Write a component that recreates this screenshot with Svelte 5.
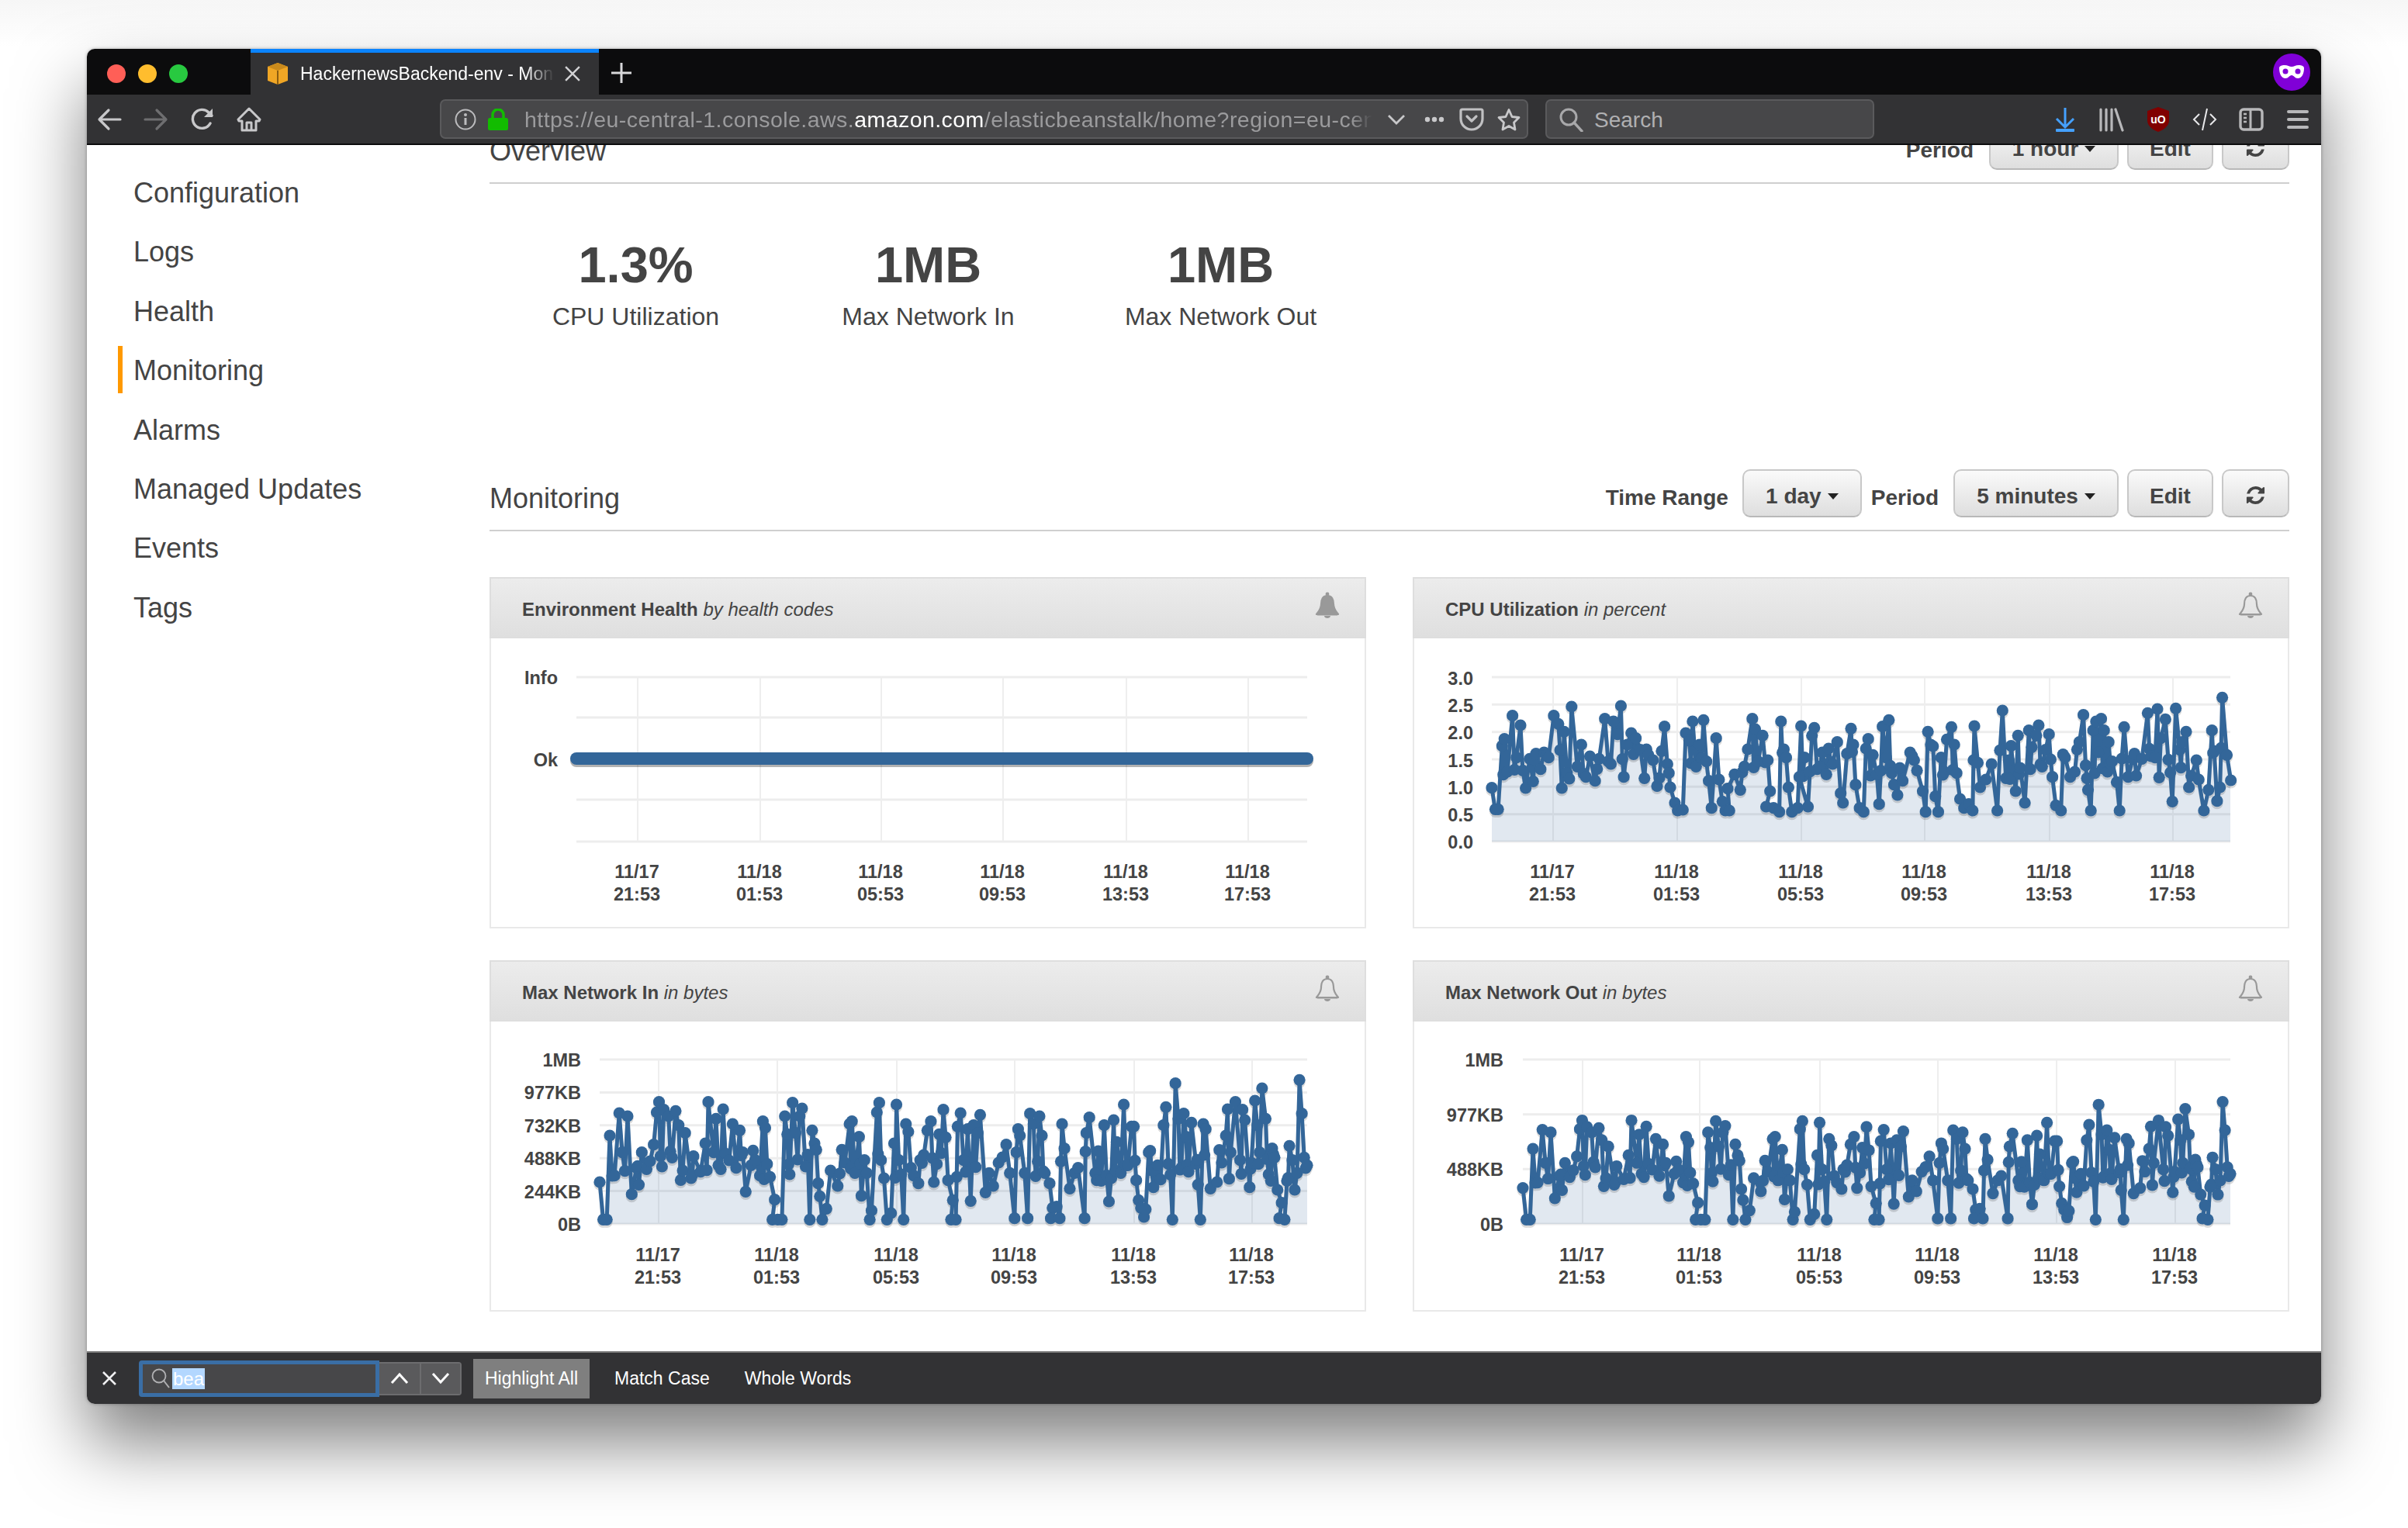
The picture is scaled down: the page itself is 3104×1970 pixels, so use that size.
<script>
	const cpu = [[139,857],[145,940],[150,940],[157,695],[161,668],[166,795],[175,578],[182,740],[189,615],[193,790],[198,858],[205,745],[211,832],[216,725],[224,785],[230,720],[238,740],[247,578],[255,610],[261,858],[265,640],[270,800],[278,543],[288,775],[295,690],[303,815],[310,735],[319,830],[326,745],[336,590],[342,755],[351,600],[358,650],[364,540],[369,815],[375,690],[382,645],[390,665],[398,710],[405,820],[412,730],[420,750],[427,850],[435,715],[440,620],[445,765],[450,855],[458,915],[463,945],[472,942],[477,645],[483,675],[489,600],[495,775],[501,690],[508,595],[513,755],[517,830],[522,935],[530,665],[535,825],[541,910],[546,945],[553,945],[550,860],[562,805],[572,865],[579,775],[585,708],[593,590],[598,630],[603,755],[611,655],[620,750],[624,870],[617,930],[630,935],[640,950],[643,600],[648,708],[652,740],[656,855],[662,950],[672,935],[678,618],[684,740],[675,815],[690,930],[697,655],[701,625],[706,785],[715,720],[722,805],[726,705],[733,765],[741,680],[747,878],[751,915],[758,725],[765,628],[769,690],[773,845],[780,935],[787,950],[791,705],[795,668],[803,730],[810,805],[814,920],[820,620],[826,740],[831,595],[836,800],[840,845],[846,885],[850,780],[855,830],[868,720],[875,750],[880,790],[890,870],[895,950],[899,640],[904,690],[912,890],[917,950],[922,740],[928,795],[932,670],[940,622],[945,690],[949,800],[955,900],[962,935],[970,920],[977,945],[980,618],[986,760],[990,855],[1000,825],[1010,765],[1020,945],[1029,558],[1035,820],[1040,750],[1044,695],[1052,870],[1056,655],[1060,780],[1068,915],[1075,635],[1080,700],[1088,655],[1092,615],[1098,775],[1104,710],[1110,650],[1116,815],[1122,925],[1131,945],[1138,740],[1147,815],[1155,795],[1163,680],[1170,575],[1174,770],[1178,865],[1183,945],[1187,635],[1192,600],[1196,720],[1201,590],[1206,635],[1212,795],[1214,680],[1220,755],[1228,835],[1233,945],[1241,622],[1248,815],[1256,745],[1262,810],[1272,745],[1282,568],[1288,735],[1295,740],[1299,552],[1305,665],[1313,592],[1318,748],[1325,910],[1331,550],[1338,710],[1342,680],[1349,640],[1354,855],[1358,810],[1367,750],[1371,825],[1380,945],[1388,865],[1394,635],[1398,715],[1403,908],[1408,855],[1412,508],[1420,730],[1427,828]];

	const net = [[200,885],[206,1030],[212,1030],[217,705],[225,860],[233,618],[238,770],[247,630],[254,932],[262,830],[266,895],[271,770],[279,835],[291,740],[296,615],[300,575],[305,825],[308,605],[316,630],[322,790],[328,610],[333,665],[340,840],[344,695],[354,870],[358,785],[370,845],[378,735],[383,575],[392,770],[396,640],[404,835],[408,603],[412,775],[424,660],[430,830],[436,685],[441,770],[446,922],[455,820],[462,800],[470,860],[475,650],[479,675],[482,815],[487,865],[495,953],[491,1030],[500,1030],[507,1030],[512,630],[516,700],[520,855],[525,578],[530,695],[537,630],[541,600],[547,825],[554,1030],[558,685],[562,735],[568,890],[571,940],[575,1030],[582,988],[589,840],[601,900],[608,760],[613,810],[621,660],[625,650],[630,850],[637,710],[641,938],[646,800],[650,850],[655,1030],[658,995],[667,615],[671,578],[674,800],[679,870],[684,1030],[691,1005],[696,735],[700,585],[704,800],[708,855],[712,1030],[716,660],[720,690],[729,860],[737,890],[740,800],[746,780],[752,685],[758,650],[763,885],[768,815],[772,700],[779,605],[783,712],[787,878],[795,955],[792,1030],[800,1030],[803,670],[808,618],[813,800],[820,680],[825,958],[830,665],[837,695],[841,625],[850,925],[856,850],[863,900],[872,810],[885,740],[891,850],[899,1025],[905,680],[908,705],[916,850],[921,1025],[925,620],[931,660],[938,805],[941,630],[945,705],[950,850],[958,890],[963,985],[960,1025],[970,980],[975,1025],[979,660],[983,755],[992,910],[1000,850],[1006,830],[1017,1025],[1020,695],[1025,635],[1035,850],[1040,765],[1045,880],[1050,665],[1058,960],[1062,870],[1066,645],[1071,730],[1078,850],[1083,585],[1090,820],[1096,670],[1100,670],[1104,878],[1108,955],[1112,985],[1117,1020],[1120,990],[1125,770],[1130,840],[1133,905],[1140,820],[1150,665],[1154,595],[1158,815],[1165,1030],[1170,503],[1175,640],[1180,830],[1184,620],[1188,710],[1192,845],[1197,655],[1205,815],[1208,895],[1212,1030],[1217,660],[1221,680],[1229,910],[1240,885],[1248,810],[1255,705],[1258,603],[1263,770],[1271,575],[1279,800],[1283,605],[1287,645],[1295,905],[1298,810],[1304,570],[1308,665],[1312,770],[1316,522],[1322,640],[1327,855],[1331,880],[1333,755],[1337,790],[1342,915],[1349,965],[1345,1025],[1354,1030],[1358,880],[1362,745],[1367,800],[1371,915],[1379,490],[1383,620],[1387,790],[1392,820]];

	// the real series has 288 samples; thicken it a little between the ones read off by eye
	function densify(points, band) {
		const out = [];
		points.forEach((p, i) => {
			out.push(p);
			const next = points[i + 1];
			if (!next || i % 3 || (p[1] > band && next[1] > band)) return;
			out.push([(p[0] + next[0]) / 2, band + ((i * 37) % 130) - 80]);
		});
		return out;
	}

	const cpuPts = densify(cpu, 775).map(([x, y]) => [(x - 139) / 1.352 + 100, y / 3 - 93]);
	const netDense = densify(net, 830);
	const inPts = netDense.map(([x, y]) => [(x - 200) / 1.307 + 140, y / 3 - 88]);
	const outPts = netDense.map(([x, y]) => [(x - 200) / 1.307 + 140, (1030 - (1030 - y) * 0.843) / 3 - 88]);

	const dates = [
		['11/17', '21:53'],
		['11/18', '01:53'],
		['11/18', '05:53'],
		['11/18', '09:53'],
		['11/18', '13:53'],
		['11/18', '17:53']
	];

	function yAxis(labels, top, bottom) {
		return labels.map((text, i) => ({ text, y: top + ((bottom - top) * i) / (labels.length - 1) }));
	}

	const cards = [
		{
			title: 'Environment Health',
			unit: 'by health codes',
			alarm: true,
			left: 110,
			right: 1052,
			top: 50,
			bottom: 262,
			labelX: 86,
			grid: [50, 102, 155, 208, 262],
			ticks: [189, 347, 503, 660, 819, 976],
			labels: [
				{ text: 'Info', y: 51 },
				{ text: 'Ok', y: 157 }
			],
			bar: true
		},
		{
			title: 'CPU Utilization',
			unit: 'in percent',
			left: 100,
			right: 1052,
			top: 50,
			bottom: 262,
			labelX: 76,
			ticks: [179, 339, 499, 658, 819, 978],
			labels: yAxis(['3.0', '2.5', '2.0', '1.5', '1.0', '0.5', '0.0'], 52, 263),
			points: cpuPts
		},
		{
			title: 'Max Network In',
			unit: 'in bytes',
			left: 140,
			right: 1052,
			top: 49,
			bottom: 261,
			labelX: 116,
			ticks: [216, 369, 523, 675, 829, 981],
			labels: yAxis(['1MB', '977KB', '732KB', '488KB', '244KB', '0B'], 50, 262),
			points: inPts
		},
		{
			title: 'Max Network Out',
			unit: 'in bytes',
			left: 140,
			right: 1052,
			top: 49,
			bottom: 261,
			labelX: 115,
			ticks: [217, 368, 523, 675, 828, 981],
			labels: yAxis(['1MB', '977KB', '488KB', '0B'], 50, 262),
			points: outPts
		}
	];

	function gridLines(card) {
		if (card.grid) return card.grid;
		return card.labels.map((_, i) => card.top + ((card.bottom - card.top) * i) / (card.labels.length - 1));
	}

	function linePath(points) {
		return points.map(([x, y], i) => `${i ? 'L' : 'M'}${x.toFixed(1)} ${y.toFixed(1)}`).join('');
	}

	function areaPath(card) {
		const pts = card.points;
		return `${linePath(pts)}L${card.right} ${pts[pts.length - 1][1].toFixed(1)}L${card.right} ${card.bottom}L${card.left} ${card.bottom}L${card.left} ${pts[0][1].toFixed(1)}Z`;
	}

	const navItems = ['Configuration', 'Logs', 'Health', 'Monitoring', 'Alarms', 'Managed Updates', 'Events', 'Tags'];
	const stats = [
		{ value: '1.3%', label: 'CPU Utilization' },
		{ value: '1MB', label: 'Max Network In' },
		{ value: '1MB', label: 'Max Network Out' }
	];

	const refresh = 'M1639 1056q0 5-1 7-64 268-268 434.5t-478 166.5q-146 0-282.5-55t-243.5-157l-129 129q-19 19-45 19t-45-19-19-45v-448q0-26 19-45t45-19h448q26 0 45 19t19 45-19 45l-137 137q71 66 161 102t187 36q134 0 250-65t186-179q11-17 53-117 8-23 30-23h192q13 0 22.5 9.5t9.5 22.5zm25-800v448q0 26-19 45t-45 19h-448q-26 0-45-19t-19-45 19-45l138-138q-148-137-349-137-134 0-250 65t-186 179q-11 17-53 117-8 23-30 23h-199q-13 0-22.5-9.5t-9.5-22.5v-7q65-268 270-434.5t480-166.5q146 0 284 55.5t245 156.5l130-129q19-19 45-19t45 19 19 45z';
</script>

{#snippet refreshIcon()}
	<svg class="refresh" viewBox="0 0 1792 1792"><path d={refresh} fill="#444" /></svg>
{/snippet}

<div class="desk">
	<div class="window">
		<div class="titlebar">
			<div class="lights">
				<span class="light red"></span>
				<span class="light yellow"></span>
				<span class="light green"></span>
			</div>
			<div class="tab">
				<svg class="tab-icon" viewBox="0 0 28 28">
					<path d="M14 0L27 5V23L14 28L1 23V5Z" fill="#f0a625" />
					<path d="M1 5L14 10L27 5L14 0Z" fill="#c98a1c" />
					<path d="M14 10V28" stroke="#8a5c10" stroke-width="2" />
				</svg>
				<span class="tab-title">HackernewsBackend-env - Mon</span>
				<svg class="tab-close" viewBox="0 0 18 18">
					<path d="M1 1L17 17M17 1L1 17" stroke="#d0d0d2" stroke-width="2.2" />
				</svg>
			</div>
			<svg class="newtab" viewBox="0 0 28 28">
				<path d="M14 1V27M1 14H27" stroke="#d8d8da" stroke-width="3" />
			</svg>
			<svg class="mask" viewBox="0 0 48 48">
				<circle cx="24" cy="24" r="24" fill="#8000d7" />
				<path d="M8 19C8 16 11 15 15 15C19 15 21 17 24 17C27 17 29 15 33 15C37 15 40 16 40 19C40 26 37 32 32 32C28 32 27 28 24 28C21 28 20 32 16 32C11 32 8 26 8 19Z" fill="#fff" />
				<circle cx="16" cy="23" r="3.5" fill="#8000d7" />
				<circle cx="32" cy="23" r="3.5" fill="#8000d7" />
			</svg>
		</div>

		<div class="toolbar">
			<div class="nav-buttons">
				<svg class="tool" viewBox="0 0 32 32"><path d="M30 16H4M15 4L3 16L15 28" fill="none" stroke="#c8c8ca" stroke-width="3.2" stroke-linecap="round" stroke-linejoin="round" /></svg>
				<svg class="tool" viewBox="0 0 32 32"><path d="M2 16H28M17 4L29 16L17 28" fill="none" stroke="#6e6e70" stroke-width="3.2" stroke-linecap="round" stroke-linejoin="round" /></svg>
				<svg class="tool" viewBox="0 0 32 32"><path d="M26 21A12 12 0 1 1 24 7L28 11" fill="none" stroke="#c8c8ca" stroke-width="3.4" stroke-linecap="round" /><path d="M29 2V13H18Z" fill="#c8c8ca" /></svg>
				<svg class="tool" viewBox="0 0 32 32"><path d="M16 2L2 16L3 18H7V30H25V18H29L30 16ZM13 30V20H19V30" fill="none" stroke="#c8c8ca" stroke-width="3" stroke-linejoin="round" /></svg>
			</div>

			<div class="urlbar">
				<svg class="u-info" viewBox="0 0 28 28">
					<circle cx="14" cy="14" r="12.5" fill="none" stroke="#bcbcbe" stroke-width="2" />
					<path d="M14 12V21" stroke="#bcbcbe" stroke-width="3" />
					<circle cx="14" cy="8" r="2" fill="#bcbcbe" />
				</svg>
				<svg class="u-lock" viewBox="0 0 26 28">
					<rect x="0" y="12" width="26" height="16" rx="2.5" fill="#12bc00" />
					<path d="M6 13V8A7 7 0 0 1 20 8V13" fill="none" stroke="#12bc00" stroke-width="3.5" />
				</svg>
				<div class="url">https://eu-central-1.console.aws.<b>amazon.com</b>/elasticbeanstalk/home?region=eu-cen</div>
				<svg class="u-chev" viewBox="0 0 24 16"><path d="M2 3L12 13L22 3" fill="none" stroke="#c8c8ca" stroke-width="2.8" /></svg>
				<svg class="u-more" viewBox="0 0 26 8"><circle cx="4" cy="4" r="3.2" fill="#c8c8ca" /><circle cx="13" cy="4" r="3.2" fill="#c8c8ca" /><circle cx="22" cy="4" r="3.2" fill="#c8c8ca" /></svg>
				<svg class="u-pocket" viewBox="0 0 32 30"><path d="M4 2H28A2 2 0 0 1 30 4V14A14 14 0 0 1 2 14V4A2 2 0 0 1 4 2ZM10 11L16 17L22 11" fill="none" stroke="#c0c0c2" stroke-width="3.2" stroke-linecap="round" stroke-linejoin="round" /></svg>
				<svg class="u-star" viewBox="0 0 30 30"><path d="M15 2.5L19 11.5L28 12.5L21.5 19L23 28L15 23.5L7 28L8.5 19L2 12.5L11 11.5Z" fill="none" stroke="#c8c8ca" stroke-width="2.8" stroke-linejoin="round" /></svg>
			</div>

			<div class="searchbar">
				<svg class="s-icon" viewBox="0 0 32 32"><circle cx="13" cy="13" r="10" fill="none" stroke="#a8a8aa" stroke-width="3" /><path d="M20 20L30 31" stroke="#a8a8aa" stroke-width="3.4" stroke-linecap="round" /></svg>
				<span class="s-text">Search</span>
			</div>

			<div class="tool-icons">
				<svg class="tool" viewBox="0 0 32 32"><path d="M16 1V25M5 15L16 26L27 15" fill="none" stroke="#45a1ff" stroke-width="3" /><rect x="4" y="28" width="24" height="4" rx="1" fill="#45a1ff" /></svg>
				<svg class="tool" viewBox="0 0 32 32"><path d="M2 3V30M9 3V30M16 3V30M21 3L30 30" fill="none" stroke="#b8b8ba" stroke-width="3.2" stroke-linecap="round" /></svg>
				<svg class="tool" viewBox="0 0 32 32">
					<path d="M16 0L30 5V17C30 24 24 29 16 32C8 29 2 24 2 17V5Z" fill="#800000" />
					<text x="16" y="21" text-anchor="middle" class="ublock">uO</text>
				</svg>
				<svg class="tool" viewBox="0 0 32 32"><path d="M9 9L2 16L9 23M23 9L30 16L23 23M19 2L13 30" fill="none" stroke="#e8e8ea" stroke-width="2" /></svg>
				<svg class="tool" viewBox="0 0 32 32"><rect x="2" y="3" width="28" height="26" rx="4" fill="none" stroke="#b8b8ba" stroke-width="3.4" /><path d="M15 3V29" stroke="#b8b8ba" stroke-width="3" /><path d="M6 9H10M6 14H10M6 19H10" stroke="#b8b8ba" stroke-width="2.6" /></svg>
				<svg class="tool" viewBox="0 0 32 32"><path d="M4 6H28M4 16H28M4 26H28" stroke="#b8b8ba" stroke-width="4" stroke-linecap="round" /></svg>
			</div>
		</div>

		<div class="page">
			<ul class="sidebar">
				{#each navItems as item}
					<li class:active={item === 'Monitoring'}>{item}</li>
				{/each}
			</ul>

			<div class="main">
				<div class="sec-head">
					<div class="sec-title">Overview</div>
					<span class="ctl-label period-top">Period</span>
					<button class="btn w-hour">1 hour<span class="caret"></span></button>
					<button class="btn w-edit">Edit</button>
					<button class="btn w-refresh">{@render refreshIcon()}</button>
				</div>

				<div class="stats">
					{#each stats as s}
						<div class="stat">
							<div class="stat-value">{s.value}</div>
							<div class="stat-label">{s.label}</div>
						</div>
					{/each}
				</div>

				<div class="sec-head">
					<div class="sec-title">Monitoring</div>
					<span class="ctl-label">Time Range</span>
					<button class="btn w-day">1 day<span class="caret"></span></button>
					<span class="ctl-label period">Period</span>
					<button class="btn w-min">5 minutes<span class="caret"></span></button>
					<button class="btn w-edit">Edit</button>
					<button class="btn w-refresh">{@render refreshIcon()}</button>
				</div>

				<div class="cards">
					{#each cards as card}
						<div class="card">
							<div class="card-head">
								<span class="card-title"><b>{card.title}</b> <i>{card.unit}</i></span>
								<svg class="bell" viewBox="0 0 34 36">
									<circle cx="17" cy="3" r="2.4" fill="#999" />
									<path d="M17 5C11 5 9 10 9 16C9 22 6 25 3 29H31C28 25 25 22 25 16C25 10 23 5 17 5Z" fill={card.alarm ? '#999' : 'none'} stroke="#999" stroke-width="2.2" stroke-linejoin="round" />
									<path d="M3 29H31L30 30.500H4Z" fill="#999" />
									<path d="M13 31H21C21 35 13 35 13 31Z" fill="#999" />
								</svg>
							</div>
							<svg class="chart" viewBox="0 0 1126 372">
								{#each gridLines(card) as y}
									<line x1={card.left} x2={card.right} y1={y} y2={y} class="grid" />
								{/each}
								{#each card.ticks as x}
									<line x1={x} x2={x} y1={card.top} y2={card.bottom} class="tick" />
								{/each}

								{#if card.points}
									<path d={areaPath(card)} class="area" />
									<g class="drop" transform="translate(0 3)">
										<path d={linePath(card.points)} class="line" />
										{#each card.points as [x, y]}
											<circle cx={x} cy={y} r="7.6" />
										{/each}
									</g>
									<g class="series">
										<path d={linePath(card.points)} class="line" />
										{#each card.points as [x, y]}
											<circle cx={x} cy={y} r="7.6" />
										{/each}
									</g>
								{/if}

								{#if card.bar}
									<rect x="102" y="150" width="958" height="16" rx="8" class="bar-shadow" />
									<rect x="102" y="147" width="958" height="16" rx="8" class="bar" />
								{/if}

								{#each card.labels as label}
									<text x={card.labelX} y={label.y + 8} text-anchor="end" class="axis">{label.text}</text>
								{/each}
								{#each dates as [day, time], i}
									<text x={card.ticks[i] - 1} y="309" text-anchor="middle" class="axis">{day}</text>
									<text x={card.ticks[i] - 1} y="338" text-anchor="middle" class="axis">{time}</text>
								{/each}
							</svg>
						</div>
					{/each}
				</div>
			</div>
		</div>

		<div class="findbar">
			<svg class="find-close" viewBox="0 0 20 20"><path d="M2 2L18 18M18 2L2 18" stroke="#f0f0f2" stroke-width="2.6" /></svg>
			<div class="find-input">
				<svg viewBox="0 0 26 26"><circle cx="11" cy="10" r="8.500" fill="none" stroke="#b0b0b2" stroke-width="1.8" /><path d="M17 16L24 25" stroke="#b0b0b2" stroke-width="2" /></svg>
				<span class="find-text">bea</span>
			</div>
			<div class="find-arrows">
				<button aria-label="Previous"><svg viewBox="0 0 24 16"><path d="M2 14L12 3L22 14" fill="none" stroke="#fff" stroke-width="3" /></svg></button>
				<button aria-label="Next"><svg viewBox="0 0 24 16"><path d="M2 2L12 13L22 2" fill="none" stroke="#fff" stroke-width="3" /></svg></button>
			</div>
			<span class="find-opt on">Highlight All</span>
			<span class="find-opt">Match Case</span>
			<span class="find-opt">Whole Words</span>
		</div>
	</div>
</div>

<style>
	:global(body) {
		margin: 0;
		background: #fff;
		font-family: 'Liberation Sans', Arial, sans-serif;
		color: #444;
	}

	.desk {
		height: 1970px;
		box-sizing: border-box;
		padding: 63px 112px 0;
		overflow: hidden;
		background: linear-gradient(#f6f6f6, #fff 60px);
	}

	.window {
		height: 1747px;
		display: flex;
		flex-direction: column;
		border-radius: 10px;
		overflow: hidden;
		background: #fff;
		box-shadow: 0 50px 90px rgba(0, 0, 0, 0.5), 0 0 4px rgba(0, 0, 0, 0.3);
	}

	.titlebar {
		height: 59px;
		flex: none;
		display: flex;
		align-items: stretch;
		background: #0c0c0d;
	}

	.lights {
		display: flex;
		align-items: center;
		gap: 16px;
		padding-left: 26px;
		padding-top: 5px;
		box-sizing: border-box;
		width: 211px;
	}

	.light {
		width: 24px;
		height: 24px;
		border-radius: 50%;
	}

	.red {
		background: #ff5f57;
	}

	.yellow {
		background: #ffbd2e;
	}

	.green {
		background: #28c940;
	}

	.tab {
		width: 449px;
		box-sizing: border-box;
		display: flex;
		align-items: center;
		background: #323234;
		border-top: 5px solid #0a84ff;
		padding-left: 21px;
		color: #fff;
	}

	.tab-icon {
		width: 28px;
		height: 28px;
		flex: none;
	}

	.tab-title {
		width: 331px;
		margin-left: 15px;
		flex: none;
		font-size: 23px;
		white-space: nowrap;
		overflow: hidden;
		-webkit-mask-image: linear-gradient(to right, #000 88%, transparent 99%);
		mask-image: linear-gradient(to right, #000 88%, transparent 99%);
	}

	.tab-close {
		width: 20px;
		height: 20px;
		margin-left: 10px;
		flex: none;
	}

	.newtab {
		width: 28px;
		height: 28px;
		margin: 17px 0 0 15px;
	}

	.mask {
		width: 48px;
		height: 48px;
		margin: 6px 14px 0 auto;
	}

	.toolbar {
		height: 65px;
		flex: none;
		box-sizing: border-box;
		display: flex;
		align-items: center;
		background: #323234;
		border-bottom: 2px solid #0c0c0d;
	}

	.tool {
		width: 32px;
		height: 32px;
		flex: none;
	}

	.nav-buttons {
		display: flex;
		gap: 28px;
		padding-left: 13px;
	}

	.urlbar {
		width: 1403px;
		height: 51px;
		margin-left: 230px;
		box-sizing: border-box;
		display: flex;
		align-items: center;
		background: #474749;
		border: 2px solid #5a5a5c;
		border-radius: 7px;
		padding-left: 17px;
		flex: none;
	}

	.u-info {
		width: 28px;
		height: 28px;
		flex: none;
	}

	.u-lock {
		width: 26px;
		height: 28px;
		margin-left: 15px;
		flex: none;
	}

	.url {
		width: 1098px;
		margin-left: 21px;
		padding-top: 2px;
		flex: none;
		font-size: 28.500px;
		letter-spacing: 0.45px;
		color: #9b9b9d;
		white-space: nowrap;
		overflow: hidden;
		-webkit-mask-image: linear-gradient(to right, #000 97%, transparent 99.5%);
		mask-image: linear-gradient(to right, #000 97%, transparent 99.5%);
	}

	.url b {
		font-weight: normal;
		color: #fff;
	}

	.u-chev {
		width: 24px;
		height: 16px;
		margin-left: 14px;
		flex: none;
	}

	.u-more {
		width: 26px;
		height: 8px;
		margin-left: 24px;
		flex: none;
	}

	.u-pocket {
		width: 32px;
		height: 30px;
		margin-left: 19px;
		flex: none;
	}

	.u-star {
		width: 30px;
		height: 30px;
		margin-left: 17px;
		flex: none;
	}

	.searchbar {
		width: 424px;
		height: 51px;
		margin-left: 22px;
		box-sizing: border-box;
		display: flex;
		align-items: center;
		background: #474749;
		border: 2px solid #5a5a5c;
		border-radius: 7px;
		padding-left: 15px;
		font-size: 28px;
		color: #b0b0b2;
		flex: none;
	}

	.s-icon {
		width: 32px;
		height: 32px;
		margin-right: 14px;
	}

	.s-text {
		padding-top: 2px;
	}

	.tool-icons {
		display: flex;
		gap: 28px;
		margin-left: 230px;
	}

	.ublock {
		font-size: 14px;
		font-weight: bold;
		fill: #fff;
	}

	.page {
		flex: 1;
		min-height: 0;
		display: flex;
		overflow: hidden;
	}

	.sidebar {
		width: 519px;
		flex: none;
		box-sizing: border-box;
		margin: 0;
		padding: 30px 0 0 40px;
		list-style: none;
		display: flex;
		flex-direction: column;
		gap: 15.4px;
		font-size: 36px;
	}

	.sidebar li {
		height: 61px;
		line-height: 64px;
		padding-left: 14px;
		border-left: 6px solid transparent;
	}

	.sidebar li.active {
		border-left-color: #f90;
	}

	.main {
		width: 2320px;
		flex: none;
		margin-top: -30px;
	}

	.sec-head {
		display: flex;
		align-items: flex-start;
		height: 80px;
		box-sizing: border-box;
		border-bottom: 2px solid #cfcfcf;
	}

	.sec-title {
		margin: 16px auto 0 0;
		font-size: 36px;
		line-height: 44px;
	}

	.ctl-label {
		margin: 20px 18px 0 0;
		font-size: 28px;
		line-height: 34px;
		font-weight: bold;
	}

	.period {
		margin-left: 12px;
		margin-right: 19px;
	}

	.period-top {
		margin-right: 20px;
	}

	.btn {
		height: 62px;
		box-sizing: border-box;
		margin: 0 0 0 11px;
		padding: 7px 0 0;
		display: flex;
		align-items: center;
		justify-content: center;
		background: linear-gradient(#fafafa, #dedede);
		border: 2px solid #c8c8c8;
		border-bottom-color: #b8b8b8;
		border-radius: 10px;
		font-family: inherit;
		font-size: 28px;
		font-weight: bold;
		color: #444;
	}

	.ctl-label + .btn {
		margin-left: 0;
	}

	.w-hour {
		width: 167px;
	}

	.w-day {
		width: 154px;
	}

	.w-min {
		width: 213px;
	}

	.w-edit {
		width: 111px;
	}

	.w-refresh {
		width: 87px;
		padding-top: 0;
	}

	.caret {
		width: 0;
		height: 0;
		margin-left: 8px;
		border-left: 7px solid transparent;
		border-right: 7px solid transparent;
		border-top: 8px solid #222;
	}

	.refresh {
		width: 27px;
		height: 27px;
		margin-top: 4px;
	}

	.stats {
		height: 368px;
		box-sizing: border-box;
		display: flex;
		padding-top: 67px;
	}

	.stat {
		width: 377px;
		text-align: center;
	}

	.stat-value {
		font-size: 65px;
		line-height: 76px;
		font-weight: bold;
	}

	.stat-label {
		margin-top: 8px;
		font-size: 32px;
		line-height: 40px;
	}

	.cards {
		margin-top: 59px;
		display: grid;
		grid-template-columns: 1130px 1130px;
		column-gap: 60px;
		row-gap: 41px;
	}

	.card {
		height: 453px;
		box-sizing: border-box;
		border: 2px solid #e9e9e9;
		border-top: 0;
	}

	.card-head {
		height: 79px;
		box-sizing: border-box;
		margin: 0 -2px;
		display: flex;
		align-items: center;
		justify-content: space-between;
		padding: 0 32px 0 40px;
		background: linear-gradient(#ececec, #dfdfdf);
		border: 2px solid #dedede;
		font-size: 24px;
	}

	.card-title {
		margin-top: 4px;
	}

	.bell {
		width: 34px;
		height: 36px;
		margin-top: -5px;
		margin-right: -1px;
	}

	.chart {
		display: block;
		width: 1126px;
		height: 372px;
	}

	.grid {
		stroke: #ededed;
		stroke-width: 3;
	}

	.tick {
		stroke: #eeeeee;
		stroke-width: 2;
	}

	.area {
		fill: rgba(51, 102, 153, 0.15);
	}

	.line {
		fill: none;
		stroke-width: 5;
		stroke-linejoin: round;
	}

	.series .line {
		stroke: #369;
	}

	.series circle {
		fill: #369;
	}

	.drop {
		opacity: 0.14;
	}

	.drop .line {
		stroke: #000;
	}

	.drop circle {
		fill: #000;
	}

	.bar {
		fill: #369;
	}

	.bar-shadow {
		fill: #000;
		opacity: 0.3;
	}

	.axis {
		font-size: 23.500px;
		font-weight: bold;
		fill: #444;
	}

	.findbar {
		height: 68px;
		flex: none;
		box-sizing: border-box;
		display: flex;
		align-items: center;
		background: #323234;
		border-top: 2px solid #808080;
		color: #fff;
		font-size: 23px;
	}

	.find-close {
		width: 20px;
		height: 20px;
		margin-left: 19px;
		flex: none;
	}

	.find-input {
		width: 310px;
		height: 47px;
		margin-left: 28px;
		box-sizing: border-box;
		display: flex;
		align-items: center;
		background: #474749;
		border: 5px solid #3a6ea5;
		border-radius: 4px 0 0 4px;
		padding-left: 10px;
	}

	.find-input svg {
		width: 26px;
		height: 26px;
		flex: none;
	}

	.find-text {
		margin-left: 2px;
		padding: 0 1px;
		background: #b3d7ff;
		line-height: 27px;
		font-size: 24px;
		color: #fff;
	}

	.find-arrows {
		display: flex;
		height: 43px;
		box-sizing: border-box;
		border: 2px solid #6c6c6e;
		border-left: 0;
		border-radius: 0 4px 4px 0;
	}

	.find-arrows button {
		width: 52px;
		padding: 0;
		display: flex;
		align-items: center;
		justify-content: center;
		background: #5a5a5c;
		border: 0;
	}

	.find-arrows button + button {
		border-left: 2px solid #6c6c6e;
	}

	.find-arrows svg {
		width: 24px;
		height: 16px;
	}

	.find-opt {
		height: 51px;
		line-height: 51px;
		padding: 0 13px;
		margin-left: 19px;
		white-space: nowrap;
	}

	.find-opt:first-of-type {
		width: 150px;
		box-sizing: border-box;
		padding: 0;
		text-align: center;
		margin-left: 15px;
		background: #7f7f7f;
	}
</style>
